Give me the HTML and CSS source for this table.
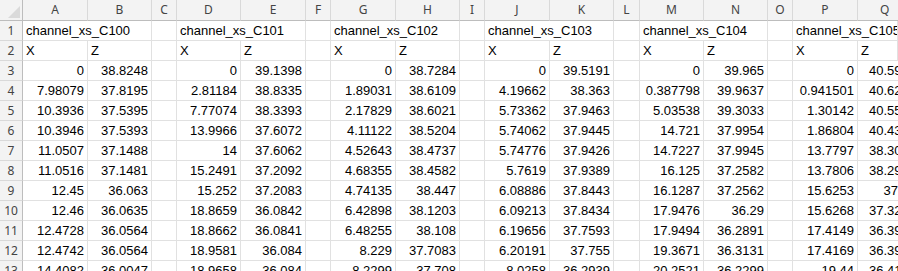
FILE: index.html
```html
<!DOCTYPE html>
<html>
<head>
<meta charset="utf-8">
<link rel="stylesheet" href="styles.css">
</head>
<body>
<div class="sheet">
  <div class="corner"><span class="tri"></span></div>
  <div class="ch">A</div><div class="ch">B</div><div class="ch">C</div><div class="ch">D</div><div class="ch">E</div><div class="ch">F</div><div class="ch">G</div><div class="ch">H</div><div class="ch">I</div><div class="ch">J</div><div class="ch">K</div><div class="ch">L</div><div class="ch">M</div><div class="ch">N</div><div class="ch">O</div><div class="ch">P</div><div class="ch last">Q</div>

  <div class="rh">1</div>
  <div class="c t s2">channel_xs_C100</div><div class="c"></div>
  <div class="c t s2">channel_xs_C101</div><div class="c"></div>
  <div class="c t s2">channel_xs_C102</div><div class="c"></div>
  <div class="c t s2">channel_xs_C103</div><div class="c"></div>
  <div class="c t s2">channel_xs_C104</div><div class="c"></div>
  <div class="c t s2">channel_xs_C105</div>

  <div class="rh">2</div>
  <div class="c t">X</div><div class="c t">Z</div><div class="c"></div>
  <div class="c t">X</div><div class="c t">Z</div><div class="c"></div>
  <div class="c t">X</div><div class="c t">Z</div><div class="c"></div>
  <div class="c t">X</div><div class="c t">Z</div><div class="c"></div>
  <div class="c t">X</div><div class="c t">Z</div><div class="c"></div>
  <div class="c t">X</div><div class="c t">Z</div>

  <div class="rh">3</div>
  <div class="c">0</div><div class="c">38.8248</div><div class="c"></div>
  <div class="c">0</div><div class="c">39.1398</div><div class="c"></div>
  <div class="c">0</div><div class="c">38.7284</div><div class="c"></div>
  <div class="c">0</div><div class="c">39.5191</div><div class="c"></div>
  <div class="c">0</div><div class="c">39.965</div><div class="c"></div>
  <div class="c">0</div><div class="c l">40.5927</div>

  <div class="rh">4</div>
  <div class="c">7.98079</div><div class="c">37.8195</div><div class="c"></div>
  <div class="c">2.81184</div><div class="c">38.8335</div><div class="c"></div>
  <div class="c">1.89031</div><div class="c">38.6109</div><div class="c"></div>
  <div class="c">4.19662</div><div class="c">38.363</div><div class="c"></div>
  <div class="c">0.387798</div><div class="c">39.9637</div><div class="c"></div>
  <div class="c">0.941501</div><div class="c l">40.6248</div>

  <div class="rh">5</div>
  <div class="c">10.3936</div><div class="c">37.5395</div><div class="c"></div>
  <div class="c">7.77074</div><div class="c">38.3393</div><div class="c"></div>
  <div class="c">2.17829</div><div class="c">38.6021</div><div class="c"></div>
  <div class="c">5.73362</div><div class="c">37.9463</div><div class="c"></div>
  <div class="c">5.03538</div><div class="c">39.3033</div><div class="c"></div>
  <div class="c">1.30142</div><div class="c l">40.5512</div>

  <div class="rh">6</div>
  <div class="c">10.3946</div><div class="c">37.5393</div><div class="c"></div>
  <div class="c">13.9966</div><div class="c">37.6072</div><div class="c"></div>
  <div class="c">4.11122</div><div class="c">38.5204</div><div class="c"></div>
  <div class="c">5.74062</div><div class="c">37.9445</div><div class="c"></div>
  <div class="c">14.721</div><div class="c">37.9954</div><div class="c"></div>
  <div class="c">1.86804</div><div class="c l">40.4371</div>

  <div class="rh">7</div>
  <div class="c">11.0507</div><div class="c">37.1488</div><div class="c"></div>
  <div class="c">14</div><div class="c">37.6062</div><div class="c"></div>
  <div class="c">4.52643</div><div class="c">38.4737</div><div class="c"></div>
  <div class="c">5.74776</div><div class="c">37.9426</div><div class="c"></div>
  <div class="c">14.7227</div><div class="c">37.9945</div><div class="c"></div>
  <div class="c">13.7797</div><div class="c l">38.3012</div>

  <div class="rh">8</div>
  <div class="c">11.0516</div><div class="c">37.1481</div><div class="c"></div>
  <div class="c">15.2491</div><div class="c">37.2092</div><div class="c"></div>
  <div class="c">4.68355</div><div class="c">38.4582</div><div class="c"></div>
  <div class="c">5.7619</div><div class="c">37.9389</div><div class="c"></div>
  <div class="c">16.125</div><div class="c">37.2582</div><div class="c"></div>
  <div class="c">13.7806</div><div class="c l">38.2996</div>

  <div class="rh">9</div>
  <div class="c">12.45</div><div class="c">36.063</div><div class="c"></div>
  <div class="c">15.252</div><div class="c">37.2083</div><div class="c"></div>
  <div class="c">4.74135</div><div class="c">38.447</div><div class="c"></div>
  <div class="c">6.08886</div><div class="c">37.8443</div><div class="c"></div>
  <div class="c">16.1287</div><div class="c">37.2562</div><div class="c"></div>
  <div class="c">15.6253</div><div class="c l">&#8199;&#8199;37.3</div>

  <div class="rh">10</div>
  <div class="c">12.46</div><div class="c">36.0635</div><div class="c"></div>
  <div class="c">18.8659</div><div class="c">36.0842</div><div class="c"></div>
  <div class="c">6.42898</div><div class="c">38.1203</div><div class="c"></div>
  <div class="c">6.09213</div><div class="c">37.8434</div><div class="c"></div>
  <div class="c">17.9476</div><div class="c">36.29</div><div class="c"></div>
  <div class="c">15.6268</div><div class="c l">37.3286</div>

  <div class="rh">11</div>
  <div class="c">12.4728</div><div class="c">36.0564</div><div class="c"></div>
  <div class="c">18.8662</div><div class="c">36.0841</div><div class="c"></div>
  <div class="c">6.48255</div><div class="c">38.108</div><div class="c"></div>
  <div class="c">6.19656</div><div class="c">37.7593</div><div class="c"></div>
  <div class="c">17.9494</div><div class="c">36.2891</div><div class="c"></div>
  <div class="c">17.4149</div><div class="c l">36.3937</div>

  <div class="rh">12</div>
  <div class="c">12.4742</div><div class="c">36.0564</div><div class="c"></div>
  <div class="c">18.9581</div><div class="c">36.084</div><div class="c"></div>
  <div class="c">8.229</div><div class="c">37.7083</div><div class="c"></div>
  <div class="c">6.20191</div><div class="c">37.755</div><div class="c"></div>
  <div class="c">19.3671</div><div class="c">36.3131</div><div class="c"></div>
  <div class="c">17.4169</div><div class="c l">36.3932</div>

  <div class="rh">13</div>
  <div class="c">14.4082</div><div class="c">36.0047</div><div class="c"></div>
  <div class="c">18.9658</div><div class="c">36.084</div><div class="c"></div>
  <div class="c">8.2299</div><div class="c">37.708</div><div class="c"></div>
  <div class="c">8.0258</div><div class="c">36.2939</div><div class="c"></div>
  <div class="c">20.2521</div><div class="c">36.2299</div><div class="c"></div>
  <div class="c">19.44</div><div class="c l">36.4122</div>
</div>
</body>
</html>
```
FILE: styles.css
```css
html, body {
  margin: 0;
  padding: 0;
  background: #ffffff;
  overflow: hidden;
}

.sheet {
  display: grid;
  grid-template-columns: 23px 65px 64px 25px 64px 65px 25px 65px 64px 25px 65px 64px 26px 64px 64px 25px 65px 40px;
  grid-template-rows: 21px repeat(13, 20px);
  width: 898px;
  overflow: hidden;
  font-family: "Liberation Sans", Arial, sans-serif;
  font-size: 13px;
  color: #000;
}

.corner {
  background: #f3f3f3;
  border-right: 1px solid #bdbdbd;
  border-bottom: 1px solid #bdbdbd;
  box-sizing: border-box;
  display: flex;
  justify-content: flex-end;
  align-items: flex-end;
  padding: 0 2px 2px 0;
}

.tri {
  width: 12px;
  height: 12px;
  background: #dadada;
  clip-path: polygon(100% 0, 100% 100%, 0 100%);
}

.ch {
  background: #f3f3f3;
  border-right: 1px solid #d9d9d9;
  border-bottom: 1px solid #bdbdbd;
  box-sizing: border-box;
  text-align: center;
  font-family: "Noto Sans", "Open Sans", sans-serif;
  font-size: 12px;
  line-height: 20px;
  color: #444;
}

.ch.last {
  text-align: left;
  padding-left: 22px;
  border-right: none;
}

.rh {
  background: #f3f3f3;
  border-right: 1px solid #bdbdbd;
  border-bottom: 1px solid #d9d9d9;
  box-sizing: border-box;
  text-align: center;
  font-family: "Noto Sans", "Open Sans", sans-serif;
  font-size: 12px;
  line-height: 19px;
  color: #444;
}

.c {
  border-right: 1px solid #e1e1e1;
  border-bottom: 1px solid #e1e1e1;
  box-sizing: border-box;
  text-align: right;
  padding: 1px 3px 0 3px;
  line-height: 18px;
  white-space: nowrap;
  overflow: hidden;
}

.c.t {
  text-align: left;
}

.c.s2 {
  grid-column: span 2;
}

.c.l {
  text-align: left;
  padding-left: 11px;
  padding-right: 0;
  border-right: none;
}
```
